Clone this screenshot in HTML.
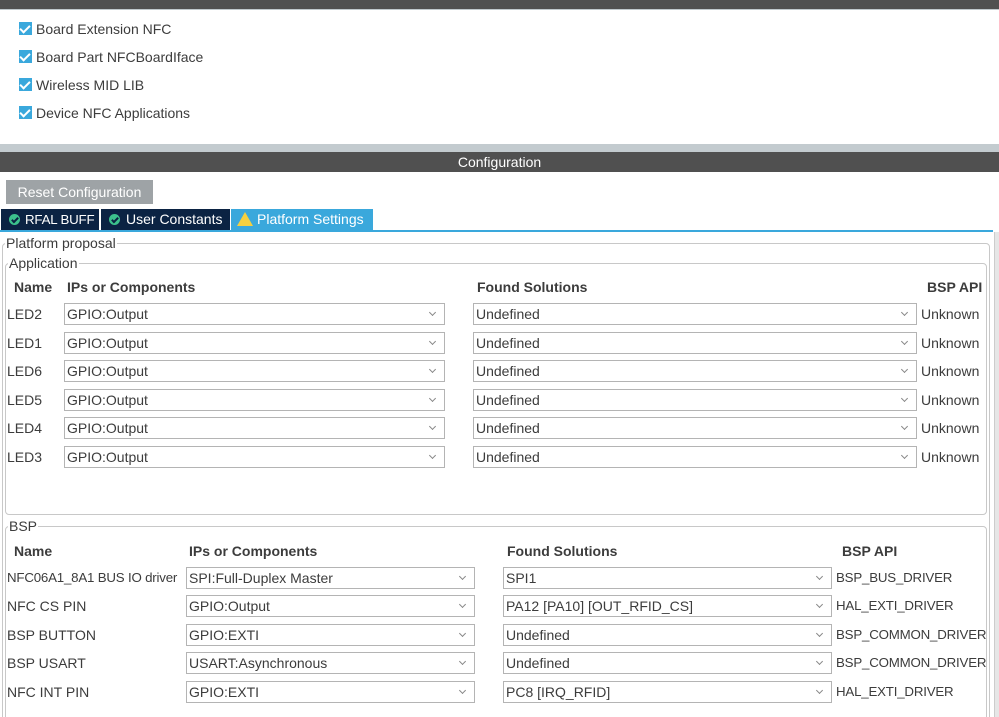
<!DOCTYPE html>
<html><head><style>
*{box-sizing:border-box;margin:0;padding:0}
html,body{width:999px;height:717px;overflow:hidden}
body{background:#fff;font-family:"Liberation Sans",sans-serif;font-size:14px;color:#3c3c3c;position:relative}
.a{position:absolute;white-space:nowrap}
.cb{position:absolute;width:13px;height:13px;background:#3aa8dc}
.cb:after{content:"";position:absolute;left:3px;top:1px;width:4px;height:8px;border:solid #fff;border-width:0 2px 2px 0;transform:rotate(45deg)}
.ck{position:absolute;width:11px;height:11px;border-radius:50%;background:#3cc28c}
.ck:after{content:"";position:absolute;left:4px;top:2px;width:2px;height:5px;border:solid #0b2343;border-width:0 2px 2px 0;transform:rotate(45deg)}
.sel{position:absolute;height:22px;border:1px solid #b4b4b4;background:#fff;padding-left:2px;line-height:20px}
.sel:after{content:"";position:absolute;right:9px;top:6px;width:4px;height:4px;border:solid #888;border-width:0 1px 1px 0;transform:rotate(45deg)}
.fs{position:absolute;border:1px solid #c8c8c8;border-radius:4px}
.lg{position:absolute;background:#fff;padding:0 1px;font-size:14px}
.n{font-size:13.3px;letter-spacing:-0.2px}
b{font-weight:bold}
</style></head><body>
<div class="a" style="left:0;top:0;width:999px;height:9px;background:#505050"></div>
<div class="a" style="left:0;top:9px;width:999px;height:1px;background:#c0c8cc"></div>
<div class="cb" style="left:19px;top:22px"></div><div class="a" style="left:36px;top:21px">Board Extension NFC</div>
<div class="cb" style="left:19px;top:50px"></div><div class="a" style="left:36px;top:49px">Board Part NFCBoardIface</div>
<div class="cb" style="left:19px;top:78px"></div><div class="a" style="left:36px;top:77px">Wireless MID LIB</div>
<div class="cb" style="left:19px;top:106px"></div><div class="a" style="left:36px;top:105px">Device NFC Applications</div>
<div class="a" style="left:0;top:144px;width:999px;height:8px;background:#c3cbcf"></div>
<div class="a" style="left:0;top:152px;width:999px;height:20px;background:#505050;color:#fff;text-align:center;line-height:21px">Configuration</div>
<div class="a" style="left:6px;top:180px;width:147px;height:24px;background:#9ea3a6;color:#fff;line-height:24px;text-align:center">Reset Configuration</div>
<div class="a n" style="left:1px;top:209px;width:98px;height:21px;background:#0b2343;color:#fff;line-height:21px;padding-left:24px">RFAL BUFF</div>
<div class="ck" style="left:9px;top:214px"></div>
<div class="a" style="left:101px;top:209px;width:129px;height:21px;background:#0b2343;color:#fff;line-height:21px;padding-left:25px">User Constants</div>
<div class="ck" style="left:109px;top:214px"></div>
<div class="a" style="left:231px;top:209px;width:142px;height:21px;background:#3aa8dc;color:#fff;line-height:21px;padding-left:26px">Platform Settings</div>
<div class="a" style="left:237px;top:212px;width:0;height:0;border-left:8px solid transparent;border-right:8px solid transparent;border-bottom:14px solid #f5d040"></div>
<div class="a" style="left:0;top:230px;width:993px;height:2px;background:#3aa8dc"></div>
<div class="a" style="left:994px;top:232px;width:5px;height:485px;background:#e6e6e6;border-left:1px solid #ccc"></div>
<div class="fs" style="left:2px;top:243px;width:988px;height:480px"></div>
<div class="lg" style="left:5px;top:235px">Platform proposal</div>
<div class="fs" style="left:5px;top:263px;width:982px;height:252px"></div>
<div class="lg" style="left:8px;top:255px">Application</div>
<div class="a" style="left:14px;top:279px"><b>Name</b></div>
<div class="a" style="left:67px;top:279px"><b>IPs or Components</b></div>
<div class="a" style="left:477px;top:279px"><b>Found Solutions</b></div>
<div class="a" style="left:927px;top:279px"><b>BSP API</b></div>
<div class="fs" style="left:5px;top:526px;width:982px;height:200px"></div>
<div class="lg" style="left:8px;top:518px">BSP</div>
<div class="a" style="left:14px;top:543px"><b>Name</b></div>
<div class="a" style="left:189px;top:543px"><b>IPs or Components</b></div>
<div class="a" style="left:507px;top:543px"><b>Found Solutions</b></div>
<div class="a" style="left:842px;top:543px"><b>BSP API</b></div>
<div class="a" style="left:7px;top:306px">LED2</div><div class="sel" style="left:64px;top:303px;width:381px">GPIO:Output</div><div class="sel" style="left:473px;top:303px;width:444px">Undefined</div><div class="a" style="left:921px;top:306px">Unknown</div>
<div class="a" style="left:7px;top:335px">LED1</div><div class="sel" style="left:64px;top:332px;width:381px">GPIO:Output</div><div class="sel" style="left:473px;top:332px;width:444px">Undefined</div><div class="a" style="left:921px;top:335px">Unknown</div>
<div class="a" style="left:7px;top:363px">LED6</div><div class="sel" style="left:64px;top:360px;width:381px">GPIO:Output</div><div class="sel" style="left:473px;top:360px;width:444px">Undefined</div><div class="a" style="left:921px;top:363px">Unknown</div>
<div class="a" style="left:7px;top:392px">LED5</div><div class="sel" style="left:64px;top:389px;width:381px">GPIO:Output</div><div class="sel" style="left:473px;top:389px;width:444px">Undefined</div><div class="a" style="left:921px;top:392px">Unknown</div>
<div class="a" style="left:7px;top:420px">LED4</div><div class="sel" style="left:64px;top:417px;width:381px">GPIO:Output</div><div class="sel" style="left:473px;top:417px;width:444px">Undefined</div><div class="a" style="left:921px;top:420px">Unknown</div>
<div class="a" style="left:7px;top:449px">LED3</div><div class="sel" style="left:64px;top:446px;width:381px">GPIO:Output</div><div class="sel" style="left:473px;top:446px;width:444px">Undefined</div><div class="a" style="left:921px;top:449px">Unknown</div>
<div class="a n" style="left:7px;top:570px">NFC06A1_8A1 BUS IO driver</div><div class="sel" style="left:186px;top:567px;width:289px">SPI:Full-Duplex Master</div><div class="sel" style="left:503px;top:567px;width:329px">SPI1</div><div class="a n" style="left:836px;top:570px">BSP_BUS_DRIVER</div>
<div class="a" style="left:7px;top:598px">NFC CS PIN</div><div class="sel" style="left:186px;top:595px;width:289px">GPIO:Output</div><div class="sel" style="left:503px;top:595px;width:329px">PA12 [PA10] [OUT_RFID_CS]</div><div class="a n" style="left:836px;top:598px">HAL_EXTI_DRIVER</div>
<div class="a" style="left:7px;top:627px">BSP BUTTON</div><div class="sel" style="left:186px;top:624px;width:289px">GPIO:EXTI</div><div class="sel" style="left:503px;top:624px;width:329px">Undefined</div><div class="a n" style="left:836px;top:627px">BSP_COMMON_DRIVER</div>
<div class="a" style="left:7px;top:655px">BSP USART</div><div class="sel" style="left:186px;top:652px;width:289px">USART:Asynchronous</div><div class="sel" style="left:503px;top:652px;width:329px">Undefined</div><div class="a n" style="left:836px;top:655px">BSP_COMMON_DRIVER</div>
<div class="a" style="left:7px;top:684px">NFC INT PIN</div><div class="sel" style="left:186px;top:681px;width:289px">GPIO:EXTI</div><div class="sel" style="left:503px;top:681px;width:329px">PC8 [IRQ_RFID]</div><div class="a n" style="left:836px;top:684px">HAL_EXTI_DRIVER</div>
</body></html>
